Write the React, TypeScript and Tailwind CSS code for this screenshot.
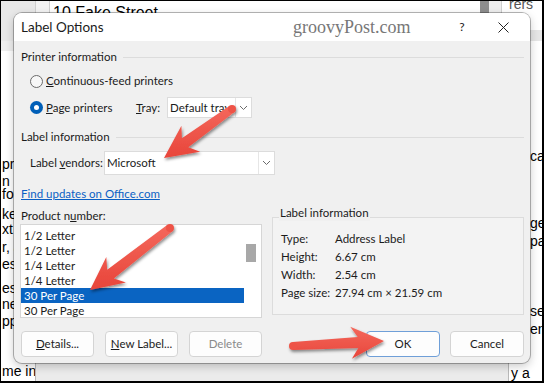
import type { ReactNode } from 'react'

const ui = "font-['Lato',sans-serif]"
const doc = "font-['Liberation_Sans',sans-serif]"

type Pt = [number, number]

// arrow outline from tail to tip, head wings swept back a little
function arrowPath(t: Pt, h: Pt, tw = 8, sw = 11, hw = 32, hl = 30) {
  const dx = h[0] - t[0]
  const dy = h[1] - t[1]
  const L = Math.hypot(dx, dy)
  const ux = dx / L
  const uy = dy / L
  const nx = -uy
  const ny = ux
  const p = (a: number, b: number) => `${(t[0] + ux * a + nx * b).toFixed(1)},${(t[1] + uy * a + ny * b).toFixed(1)}`
  const bj = L - hl
  return `M ${p(0, -tw / 2)} L ${p(bj + 4, -sw / 2)} L ${p(bj - 3, -hw / 2)} L ${p(L, 0)} L ${p(bj - 3, hw / 2)} L ${p(bj + 4, sw / 2)} L ${p(0, tw / 2)} Z`
}

const arrows: Array<{ t: Pt; h: Pt }> = [
  { t: [232, 109], h: [164, 158] },
  { t: [170, 228], h: [90, 290] },
  { t: [293, 346], h: [384, 341] },
]

function Chevron() {
  return (
    <svg width="9" height="6" viewBox="0 0 9 6" className="text-[#6b6b6b]">
      <path d="M1 1 L4.5 4.5 L8 1" fill="none" stroke="currentColor" strokeWidth="1" />
    </svg>
  )
}

function Select({ value, width, height }: { value: string; width: string; height: string }) {
  return (
    <div className={`flex ${width} ${height} items-stretch border border-[#dcdcdc] bg-white`}>
      <span className="flex flex-1 items-center overflow-hidden whitespace-nowrap pl-[2px]">{value}</span>
      <span className="flex w-[16px] items-center justify-center border-l border-[#e6e6e6]">
        <Chevron />
      </span>
    </div>
  )
}

function Radio({ on }: { on?: boolean }) {
  return on ? (
    <span className="flex h-[13px] w-[13px] items-center justify-center rounded-full bg-[#005fb8]">
      <span className="h-[5px] w-[5px] rounded-full bg-white" />
    </span>
  ) : (
    <span className="h-[13px] w-[13px] rounded-full border border-[#6b6b6b] bg-[#f7f7f7]" />
  )
}

function GroupHead({ children }: { children: ReactNode }) {
  return (
    <div className="flex h-[16px] items-center gap-[6px]">
      <span>{children}</span>
      <span className="h-px flex-1 bg-[#dcdcdc]" />
    </div>
  )
}

function Btn({ children, w, muted, primary }: { children: ReactNode; w: string; muted?: boolean; primary?: boolean }) {
  return (
    <div
      className={`flex h-full ${w} items-center justify-center rounded-[4px] border bg-[#fdfdfd] ${
        primary ? 'border-[#6f9fd8]' : 'border-[#d4d4d4]'
      } ${muted ? 'text-[#8a8a8a]' : ''}`}
    >
      {children}
    </div>
  )
}

const leftBits: Array<[string, number]> = [
  ['pr', 156], ['n', 173], ['fo', 186], ['ke', 206], ['xt', 221], ['r, a', 239], ['es.', 256], ['es .', 280], ['ne', 296], ['ppl', 313],
]
const rightBits: Array<[string, number]> = [['ca', 148], ['ge,', 215], ['pa', 233], ['se', 303], ['en', 321]]

export default function App() {
  const products = ['1/2 Letter', '1/2 Letter', '1/4 Letter', '1/4 Letter', '30 Per Page', '30 Per Page']
  const info: Array<[string, string]> = [
    ['Type:', 'Address Label'],
    ['Height:', '6.67 cm'],
    ['Width:', '2.54 cm'],
    ['Page size:', '27.94 cm × 21.59 cm'],
  ]

  return (
    <div className="h-[383px] w-[544px] bg-black pb-[2px] pl-px pr-[2px] pt-px">
      <div className={`relative h-full w-full overflow-hidden bg-white ${doc} text-[14px] text-black`}>
        {/* document behind the dialog */}
        <div className="absolute left-0 top-0 flex h-[40px] w-full">
          <div className="w-[34px] bg-[#e8e8e8]" />
          <div className="w-[15px] border-x border-[#cfcfcf] bg-[#f3f3f3]" />
          <div className="h-[12px] flex-1 overflow-hidden pl-[3px] pt-[3px] text-[16px] leading-[18px]">10 Fake Street</div>
          <div className="w-[9px] bg-[#8e8e8e]" />
          <div className="w-[13px] border-r border-[#cfcfcf] bg-[#eeeeee]" />
          <div className="h-[8px] w-[40px] overflow-hidden pl-[7px] text-[14px] leading-[6px] text-[#555]">rers</div>
        </div>
        <div className="absolute left-0 top-[40px] h-[10px] w-[14px] bg-[#eeeeee]" />
        <div className="absolute right-0 top-[29px] h-[11px] w-[14px] bg-[#e6e6e6]" />
        {leftBits.map(([s, y]) => (
          <div key={s + y} className="absolute left-[1px] whitespace-nowrap leading-[14px]" style={{ top: y }}>
            {s}
          </div>
        ))}
        {rightBits.map(([s, y]) => (
          <div key={s + y} className="absolute left-[529px] whitespace-nowrap leading-[14px]" style={{ top: y }}>
            {s}
          </div>
        ))}
        <div className="absolute bottom-0 left-0 flex h-[20px] w-full">
          <div className="w-[34px] whitespace-nowrap pl-[1px] leading-[20px]">me in</div>
          <div className="flex-1 border-x border-[#b9b9b9] bg-[#ebebeb]" />
          <div className="w-[33px] whitespace-nowrap pl-[2px] leading-[24px]">y a</div>
        </div>

        {/* dialog */}
        <div
          className={`absolute left-[13px] top-[12px] flex h-[350px] w-[516px] flex-col overflow-hidden rounded-[8px] bg-[#f0f0f0] ${ui} text-[11.5px] text-[#1b1b1b] shadow-[0_0_0_1px_rgba(0,0,0,0.28),0_3px_10px_rgba(0,0,0,0.22)]`}
        >
          <div className="relative flex h-[28px] shrink-0 items-center bg-white pl-[7px]">
            <span className="text-[13.5px]">Label Options</span>
            <span className="absolute left-[279px] top-[4px] font-['Liberation_Serif',serif] text-[18px] leading-[20px] text-[#777]">
              groovyPost.com
            </span>
            <span className="ml-auto w-[46px] text-center text-[12px]">?</span>
            <span className="mr-[9px] flex w-[36px] items-center justify-center">
              <svg width="11" height="11" viewBox="0 0 11 11">
                <path d="M0.5 0.5 L10.5 10.5 M10.5 0.5 L0.5 10.5" stroke="#222" strokeWidth="1" />
              </svg>
            </span>
          </div>

          <div className="flex flex-col whitespace-nowrap pl-[7px] pr-[6px]">
            <div className="mt-[8px]">
              <GroupHead>Printer information</GroupHead>
            </div>
            <div className="mt-[6px] flex h-[20px] items-center gap-[3px] pl-[9px]">
              <Radio />
              <span>
                <u>C</u>ontinuous-feed printers
              </span>
            </div>
            <div className="mt-[6px] flex h-[21px] items-center pl-[9px]">
              <Radio on />
              <span className="ml-[3px] w-[90px]">
                <u>P</u>age printers
              </span>
              <span className="w-[31px]">
                <u>T</u>ray:
              </span>
              <Select value="Default tray" width="w-[85px]" height="h-[21px]" />
            </div>

            <div className="mt-[11px]">
              <GroupHead>Label information</GroupHead>
            </div>
            <div className="mt-[6px] flex h-[24px] items-center pl-[9px]">
              <span className="w-[74px]">
                Label <u>v</u>endors:
              </span>
              <Select value="Microsoft" width="w-[171px]" height="h-[24px]" />
            </div>
            <div className="mt-[11px] flex h-[16px] items-center">
              <span className="text-[#0a5fc4] underline">Find updates on Office.com</span>
            </div>

            <div className="mt-[6px] flex gap-[10px]">
              <div className="-ml-px flex w-[242px] flex-col">
                <div className="flex h-[16px] items-center pl-px">
                  Product n<u>u</u>mber:
                </div>
                <div className="flex h-[94px] border border-[#d6d6d6] bg-white">
                  <div className="flex flex-1 flex-col pt-[3px]">
                    {products.map((p, i) => (
                      <div
                        key={i}
                        className={`flex h-[15px] items-center pl-[3px] ${i === 4 ? 'bg-[#0a64c2] text-white' : ''}`}
                      >
                        {p}
                      </div>
                    ))}
                  </div>
                  <div className="w-[17px] pl-[2px] pt-[19px]">
                    <div className="h-[18px] w-[10px] bg-[#a8a8a8]" />
                  </div>
                </div>
              </div>

              <div className="mt-[9px] flex-1">
                <div className="relative h-[98px] border border-[#dcdcdc] bg-[#f3f3f3] pl-[8px] pt-[12px]">
                  <span className="absolute left-[6px] top-[-13px] bg-[#f0f0f0] px-px leading-[16px]">Label information</span>
                  {info.map(([k, v]) => (
                    <div key={k} className="flex h-[18px] items-center">
                      <span className="w-[54px]">{k}</span>
                      <span>{v}</span>
                    </div>
                  ))}
                </div>
              </div>
            </div>

            <div className="mt-[13px] flex h-[26px]">
              <Btn w="w-[73px]">
                <span>
                  <u>D</u>etails...
                </span>
              </Btn>
              <div className="ml-[11px]">
                <Btn w="w-[73px]">
                  <span>
                    <u>N</u>ew Label...
                  </span>
                </Btn>
              </div>
              <div className="ml-[11px]">
                <Btn w="w-[73px]" muted>
                  Delete
                </Btn>
              </div>
              <div className="ml-auto flex gap-[10px]">
                <Btn w="w-[74px]" primary>
                  OK
                </Btn>
                <Btn w="w-[74px]">Cancel</Btn>
              </div>
            </div>
          </div>
        </div>

        {/* red callout arrows */}
        <svg className="absolute left-[-1px] top-[-1px]" width="544" height="383" viewBox="0 0 544 383">
          <defs>
            <linearGradient id="ag" x1="0" y1="0" x2="0" y2="1">
              <stop offset="0" stopColor="#f4685c" />
              <stop offset="1" stopColor="#e8453a" />
            </linearGradient>
            <filter id="sh" x="-20%" y="-20%" width="140%" height="140%">
              <feDropShadow dx="1" dy="2" stdDeviation="1.6" floodColor="#000" floodOpacity="0.45" />
            </filter>
          </defs>
          {arrows.map((a, i) => (
            <g key={i} filter="url(#sh)">
              <path d={arrowPath(a.t, a.h)} fill="url(#ag)" strokeLinejoin="round" />
              <circle cx={a.t[0]} cy={a.t[1]} r="4" fill="#ee5347" />
            </g>
          ))}
        </svg>
      </div>
    </div>
  )
}
